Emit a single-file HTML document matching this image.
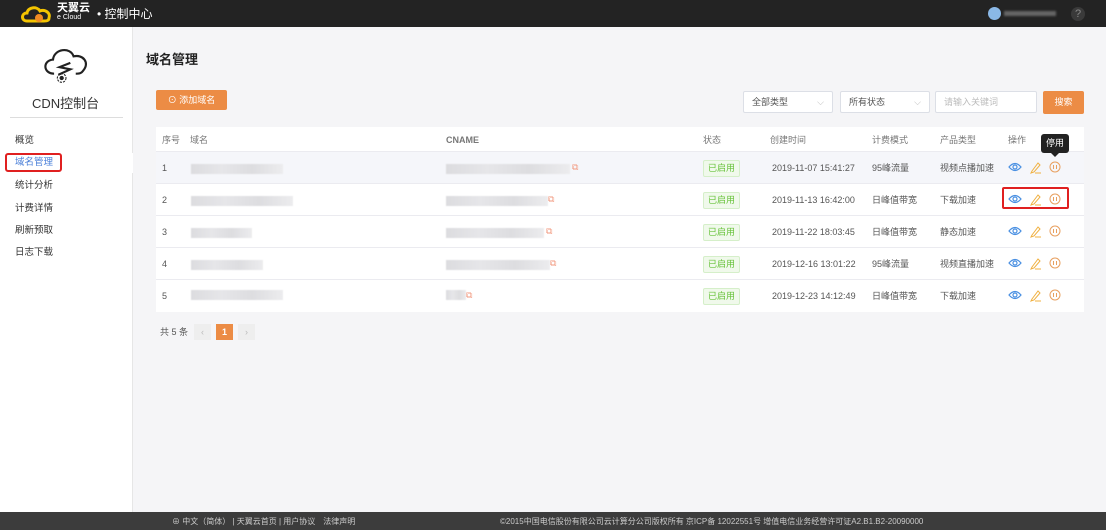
<!DOCTYPE html>
<html><head><meta charset="utf-8"><style>
*{margin:0;padding:0;box-sizing:border-box}
body{width:1106px;height:530px;overflow:hidden;font-family:"Liberation Sans","Noto Sans CJK SC",sans-serif;font-size:9px;line-height:11px;color:#555;background:#f5f5f7;position:relative}
.top{position:absolute;left:0;top:0;width:1106px;height:27px;background:#232323}
.side{position:absolute;left:0;top:27px;width:133px;height:485px;background:#fff;border-right:1px solid #e6e6e6}
.foot{position:absolute;left:0;top:512px;width:1106px;height:18px;background:#3c3c3c;color:#ccc;font-size:8px}
.abs{position:absolute;white-space:nowrap;line-height:11px}
.nav{position:absolute;left:15px;font-size:9.5px;color:#333;line-height:12px}
.card{position:absolute;left:156px;top:127px;width:928px;height:185px;background:#fff}
.row{position:absolute;left:0;width:928px;height:32px;border-top:1px solid #ebebf0}
.blur{position:absolute;height:10px;background:linear-gradient(90deg,#dcdcdf,#e6e6e9,#dddde0,#ececee);filter:blur(.6px)}
.tag{position:absolute;left:547px;top:8px;width:37px;height:17px;border:1px solid #d5efc9;background:#f0f9eb;color:#67c23a;font-size:9px;text-align:center;line-height:15px;border-radius:2px}
.sel{position:absolute;top:91px;height:22px;background:#fff;border:1px solid #dcdfe6;border-radius:2px;font-size:9px;color:#555;padding:0 8px;line-height:20px}
.c{top:11px}
</style></head><body>
<div class="top">
<svg class="abs" style="left:19px;top:4px" width="36" height="20" viewBox="0 0 36 20"><path d="M8 17 C2 17 2 9 8 9 C9 3 18 2 21 7 C26 5 32 9 30 14 C30 17 27 17 25 17 Z" fill="none" stroke="#f4c400" stroke-width="3"/><circle cx="20" cy="14" r="4" fill="#f08a24"/></svg>
<div class="abs" style="left:57px;top:3px;color:#fff;font-size:11px;font-weight:bold;line-height:11px">天翼云</div>
<div class="abs" style="left:57px;top:14px;color:#fff;font-size:7px;line-height:8px">e Cloud</div>
<div class="abs" style="left:97px;top:7px;color:#fff;font-size:12px;line-height:14px">• 控制中心</div>
<div class="abs" style="left:988px;top:7px;width:13px;height:13px;border-radius:50%;background:#8ab8e6"></div>
<div class="abs" style="left:1004px;top:11px;width:52px;height:5px;background:#666;filter:blur(1px)"></div>
<div class="abs" style="left:1071px;top:7px;width:14px;height:14px;border-radius:50%;background:#3a3a3a;color:#888;text-align:center;font-size:11px;line-height:14px">?</div>
</div>
<div class="side">
<svg class="abs" style="left:40px;top:16px" width="52" height="44" viewBox="0 0 48 40"><path d="M13 28 C3 28 2 16 12 15 C13 5 28 3 31 12 C40 10 46 18 40 25 C38 28 36 28 33 28" fill="none" stroke="#222" stroke-width="2"/><path d="M28 18 L18 22 L28 24 L17 29" fill="none" stroke="#222" stroke-width="2"/><circle cx="20" cy="32" r="4" fill="none" stroke="#222" stroke-dasharray="2 1"/><circle cx="20" cy="32" r="2" fill="#222"/></svg>
<div class="abs" style="left:32px;top:69px;font-size:13px;line-height:16px;color:#333">CDN控制台</div>
<div class="abs" style="left:10px;top:90px;width:113px;height:1px;background:#ddd"></div>
<div class="nav" style="top:108px">概览</div>
<div class="abs" style="left:0;top:126px;width:133px;height:20px;background:#fff"></div>
<div class="abs" style="left:5px;top:126px;width:57px;height:19px;border:2px solid #e02020;border-radius:3px"></div>
<div class="nav" style="top:130px;color:#4a7fd8">域名管理</div>
<div class="nav" style="top:153px">统计分析</div>
<div class="nav" style="top:176px">计费详情</div>
<div class="nav" style="top:198px">刷新预取</div>
<div class="nav" style="top:220px">日志下载</div>
</div>
<div class="abs" style="left:146px;top:52px;font-size:13px;line-height:16px;font-weight:bold;color:#222">域名管理</div>
<div class="abs" style="left:156px;top:90px;width:71px;height:20px;background:#ec8c45;color:#fff;border-radius:2px;font-size:9px;line-height:20px;text-align:center">⊙ 添加域名</div>
<div class="sel" style="left:743px;width:90px">全部类型<span style="float:right;color:#bbb">⌵</span></div>
<div class="sel" style="left:840px;width:90px">所有状态<span style="float:right;color:#bbb">⌵</span></div>
<div class="sel" style="left:935px;width:102px;color:#bbb">请输入关键词</div>
<div class="abs" style="left:1043px;top:91px;width:41px;height:23px;background:#ec8c45;color:#fff;border-radius:2px;text-align:center;line-height:23px;font-size:9px">搜索</div>
<div class="card">
<div class="abs" style="left:6px;top:8px;color:#777">序号</div><div class="abs" style="left:34px;top:8px;color:#777">域名</div><div class="abs" style="left:290px;top:8px;color:#777;font-weight:bold">CNAME</div><div class="abs" style="left:547px;top:8px;color:#777">状态</div><div class="abs" style="left:614px;top:8px;color:#777">创建时间</div><div class="abs" style="left:716px;top:8px;color:#777">计费模式</div><div class="abs" style="left:784px;top:8px;color:#777">产品类型</div><div class="abs" style="left:852px;top:8px;color:#777">操作</div>
<div class="row" style="top:24px;background:#f5f6fa"><div class="abs c" style="left:6px">1</div><div class="blur" style="left:35px;top:12px;width:92px"></div><div class="blur" style="left:290px;top:12px;width:124px"></div><div class="abs" style="left:416px;top:10px;color:#f29a80">⧉</div><div class="tag">已启用</div><div class="abs c" style="left:616px">2019-11-07 15:41:27</div><div class="abs c" style="left:716px">95峰流量</div><div class="abs c" style="left:784px">视频点播加速</div></div>
<div class="row" style="top:56px"><div class="abs c" style="left:6px">2</div><div class="blur" style="left:35px;top:12px;width:102px"></div><div class="blur" style="left:290px;top:12px;width:102px"></div><div class="abs" style="left:392px;top:10px;color:#f29a80">⧉</div><div class="tag">已启用</div><div class="abs c" style="left:616px">2019-11-13 16:42:00</div><div class="abs c" style="left:716px">日峰值带宽</div><div class="abs c" style="left:784px">下载加速</div></div>
<div class="row" style="top:88px"><div class="abs c" style="left:6px">3</div><div class="blur" style="left:35px;top:12px;width:61px"></div><div class="blur" style="left:290px;top:12px;width:98px"></div><div class="abs" style="left:390px;top:10px;color:#f29a80">⧉</div><div class="tag">已启用</div><div class="abs c" style="left:616px">2019-11-22 18:03:45</div><div class="abs c" style="left:716px">日峰值带宽</div><div class="abs c" style="left:784px">静态加速</div></div>
<div class="row" style="top:120px"><div class="abs c" style="left:6px">4</div><div class="blur" style="left:35px;top:12px;width:72px"></div><div class="blur" style="left:290px;top:12px;width:104px"></div><div class="abs" style="left:394px;top:10px;color:#f29a80">⧉</div><div class="tag">已启用</div><div class="abs c" style="left:616px">2019-12-16 13:01:22</div><div class="abs c" style="left:716px">95峰流量</div><div class="abs c" style="left:784px">视频直播加速</div></div>
<div class="row" style="top:152px"><div class="abs c" style="left:6px">5</div><div class="blur" style="left:35px;top:10px;width:92px"></div><div class="blur" style="left:290px;top:10px;width:20px"></div><div class="abs" style="left:310px;top:10px;color:#f29a80">⧉</div><div class="tag">已启用</div><div class="abs c" style="left:616px">2019-12-23 14:12:49</div><div class="abs c" style="left:716px">日峰值带宽</div><div class="abs c" style="left:784px">下载加速</div></div>
</div>
<svg class="abs" style="left:1008px;top:160px" width="60" height="145" viewBox="0 0 60 145">
<g id="ic"><path d="M1 7 Q7 0 13 7 Q7 14 1 7Z" fill="none" stroke="#4a90e2" stroke-width="1.2"/><circle cx="7" cy="7" r="2" fill="none" stroke="#4a90e2" stroke-width="1.2"/><path d="M24 11 L30 3 L32 5 L26 12 L23 13Z M27 13 H33" fill="none" stroke="#f0b040" stroke-width="1"/><circle cx="47" cy="7" r="5" fill="none" stroke="#e8a060" stroke-width="1"/><path d="M45.5 5 V9 M48.5 5 V9" stroke="#e8a060"/></g>
<use href="#ic" y="32"/><use href="#ic" y="64"/><use href="#ic" y="96"/><use href="#ic" y="128"/>
</svg>
<div class="abs" style="left:1002px;top:187px;width:67px;height:22px;border:2px solid #e02020;border-radius:2px"></div>
<div class="abs" style="left:1041px;top:134px;width:28px;height:19px;background:#222;color:#fff;border-radius:3px;text-align:center;line-height:19px;font-size:9px">停用</div>
<div class="abs" style="left:1051px;top:153px;width:0;height:0;border:4px solid transparent;border-top-color:#222"></div>
<div class="abs" style="left:160px;top:327px;color:#555">共 5 条</div>
<div class="abs" style="left:194px;top:324px;width:17px;height:16px;background:#eee;color:#bbb;text-align:center;line-height:16px">‹</div>
<div class="abs" style="left:216px;top:324px;width:17px;height:16px;background:#ec8c45;color:#fff;text-align:center;line-height:16px;font-weight:bold">1</div>
<div class="abs" style="left:238px;top:324px;width:17px;height:16px;background:#eee;color:#bbb;text-align:center;line-height:16px">›</div>
<div class="foot">
<div class="abs" style="left:172px;top:4px">⊕ 中文（简体） | 天翼云首页 | 用户协议　法律声明</div>
<div class="abs" style="left:500px;top:4px">©2015中国电信股份有限公司云计算分公司版权所有 京ICP备 12022551号 增值电信业务经营许可证A2.B1.B2-20090000</div>
</div>
</body></html>
